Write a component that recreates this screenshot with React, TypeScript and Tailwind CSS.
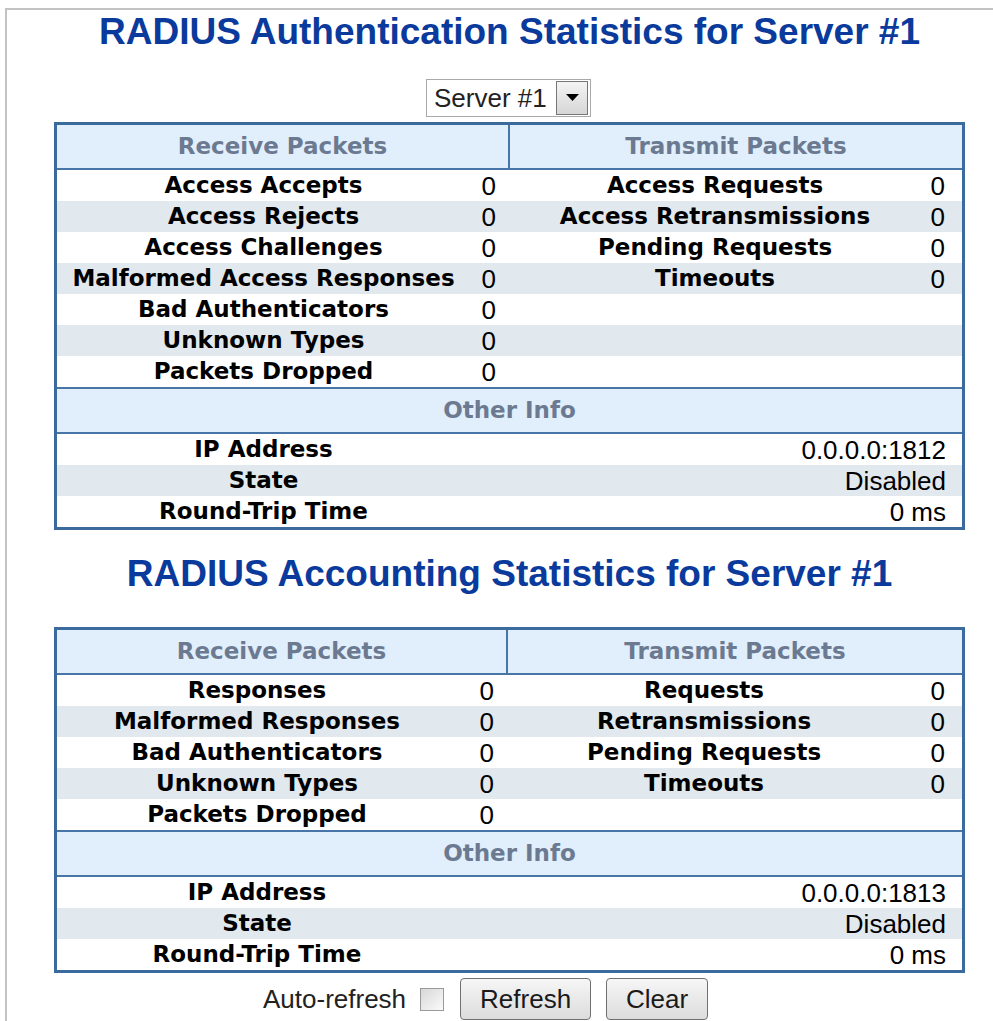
import React from 'react';

type Row = { label: string; value: string };

const authRx: Row[] = [
  { label: 'Access Accepts', value: '0' },
  { label: 'Access Rejects', value: '0' },
  { label: 'Access Challenges', value: '0' },
  { label: 'Malformed Access Responses', value: '0' },
  { label: 'Bad Authenticators', value: '0' },
  { label: 'Unknown Types', value: '0' },
  { label: 'Packets Dropped', value: '0' },
];
const authTx: Row[] = [
  { label: 'Access Requests', value: '0' },
  { label: 'Access Retransmissions', value: '0' },
  { label: 'Pending Requests', value: '0' },
  { label: 'Timeouts', value: '0' },
];
const acctRx: Row[] = [
  { label: 'Responses', value: '0' },
  { label: 'Malformed Responses', value: '0' },
  { label: 'Bad Authenticators', value: '0' },
  { label: 'Unknown Types', value: '0' },
  { label: 'Packets Dropped', value: '0' },
];
const acctTx: Row[] = [
  { label: 'Requests', value: '0' },
  { label: 'Retransmissions', value: '0' },
  { label: 'Pending Requests', value: '0' },
  { label: 'Timeouts', value: '0' },
];

const LABEL = "font-['DejaVu_Sans',Verdana,sans-serif] font-bold text-[23px] text-black text-center whitespace-nowrap";
const VALUE = "font-['Liberation_Sans',Arial,sans-serif] text-[26px] text-black text-right";
const HEAD = "bg-[#e1eefc] flex items-center justify-center font-['DejaVu_Sans',Verdana,sans-serif] font-bold text-[23px] text-[#6b7a90]";

function StatsTable({
  rx,
  tx,
  widths,
  info,
}: {
  rx: Row[];
  tx: Row[];
  widths: [number, number, number];
  info: Row[];
}) {
  const [w1, w2, w3] = widths;
  const rows = Math.max(rx.length, tx.length);
  return (
    <div className="w-[911px] border-[3px] border-[#3b6a9d] bg-white">
      <div className="flex border-b-2 border-[#4775a6]">
        <div className={HEAD + ' h-[43px] border-r-2 border-[#4775a6]'} style={{ width: w1 + w2 }}>
          Receive Packets
        </div>
        <div className={HEAD + ' h-[43px] flex-1'}>Transmit Packets</div>
      </div>
      {Array.from({ length: rows }).map((_, i) => (
        <div key={i} className={`flex h-[31px] items-center leading-none ${i % 2 ? 'bg-[#e1e8ee]' : 'bg-white'}`}>
          <div className={LABEL} style={{ width: w1 }}>{rx[i]?.label}</div>
          <div className={VALUE + ' pr-[14px]'} style={{ width: w2 }}>{rx[i]?.value}</div>
          <div className={LABEL} style={{ width: w3 }}>{tx[i]?.label}</div>
          <div className={VALUE + ' flex-1 pr-[17px]'}>{tx[i]?.value}</div>
        </div>
      ))}
      <div className={HEAD + ' h-[47px] border-y-2 border-[#4775a6]'}>Other Info</div>
      {info.map((r, i) => (
        <div key={r.label} className={`flex h-[31px] items-center leading-none ${i % 2 ? 'bg-[#e1e8ee]' : 'bg-white'}`}>
          <div className={LABEL} style={{ width: w1 }}>{r.label}</div>
          <div className={VALUE + ' flex-1 pr-[16px]'}>{r.value}</div>
        </div>
      ))}
    </div>
  );
}

function Title({ children }: { children: React.ReactNode }) {
  return (
    <h1 className="text-center font-['Liberation_Sans',Arial,sans-serif] font-bold text-[37px] leading-[42px] text-[#0a3a9c] whitespace-nowrap">
      {children}
    </h1>
  );
}

function GrayButton({ children, width }: { children: React.ReactNode; width: string }) {
  return (
    <button
      className={`${width} h-[42px] rounded-[4px] border border-[#707070] bg-gradient-to-b from-[#f6f6f6] to-[#dcdcdc] font-['Liberation_Sans',Arial,sans-serif] text-[26px] text-[#1a1a1a] leading-none`}
    >
      {children}
    </button>
  );
}

export default function App() {
  return (
    <div className="min-h-screen bg-white">
      <div className="ml-[5px] pt-[8px]">
        <div className="min-h-[1013px] border-l-2 border-t-2 border-[#c3c3c3] pl-[47px]">
          <div className="w-[911px]">
            <div className="pt-[1px]">
              <Title>RADIUS Authentication Statistics for Server #1</Title>
            </div>

            <div className="mt-[26px] flex justify-center">
              <div className="ml-[-2px] flex h-[38px] w-[165px] items-center border border-[#a9a9a9] bg-white pl-[7px]">
                <span className="flex-1 font-['Liberation_Sans',Arial,sans-serif] text-[26px] text-[#222] leading-none">
                  Server #1
                </span>
                <div className="mr-[2px] flex h-[34px] w-[32px] items-center justify-center border border-[#777] bg-gradient-to-b from-[#f4f4f4] to-[#d6d6d6]">
                  <svg width="13" height="8" viewBox="0 0 13 8">
                    <path d="M0 0 H13 L6.5 7 Z" fill="#000" />
                  </svg>
                </div>
              </div>
            </div>

            <div className="mt-[5px]">
              <StatsTable
                rx={authRx}
                tx={authTx}
                widths={[413, 40, 410]}
                info={[
                  { label: 'IP Address', value: '0.0.0.0:1812' },
                  { label: 'State', value: 'Disabled' },
                  { label: 'Round-Trip Time', value: '0 ms' },
                ]}
              />
            </div>

            <div className="mt-[23px]">
              <Title>RADIUS Accounting Statistics for Server #1</Title>
            </div>

            <div className="mt-[32px]">
              <StatsTable
                rx={acctRx}
                tx={acctTx}
                widths={[400, 51, 392]}
                info={[
                  { label: 'IP Address', value: '0.0.0.0:1813' },
                  { label: 'State', value: 'Disabled' },
                  { label: 'Round-Trip Time', value: '0 ms' },
                ]}
              />
            </div>

            <div className="mt-[5px] flex items-center pl-[209px]">
              <span className="font-['Liberation_Sans',Arial,sans-serif] text-[26px] text-[#222] leading-none">
                Auto-refresh
              </span>
              <span className="ml-[14px] h-[23px] w-[24px] border border-[#9a9a9a] bg-gradient-to-br from-[#d8d8d8] to-[#fafafa]" />
              <span className="ml-[16px]">
                <GrayButton width="w-[131px]">Refresh</GrayButton>
              </span>
              <span className="ml-[15px]">
                <GrayButton width="w-[102px]">Clear</GrayButton>
              </span>
            </div>
          </div>
        </div>
      </div>
    </div>
  );
}
